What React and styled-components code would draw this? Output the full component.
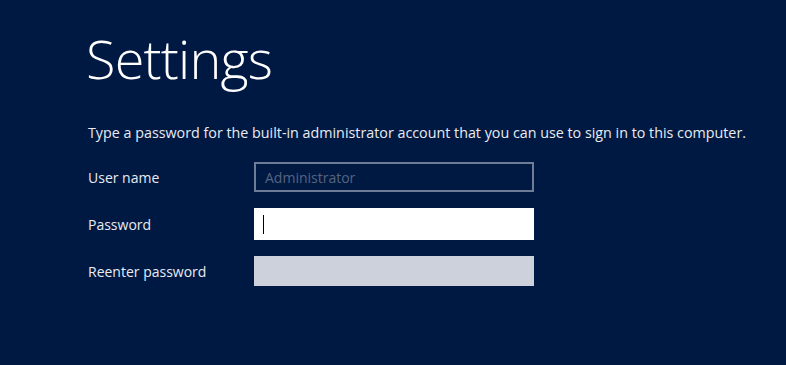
import styled, { createGlobalStyle } from "styled-components";

const GlobalStyle = createGlobalStyle`
  html, body {
    margin: 0;
    padding: 0;
    background: #001943;
  }
  body {
    font-family: "Open Sans", "Noto Sans", sans-serif;
  }
`;

const Page = styled.div`
  width: 786px;
  height: 365px;
  background: #001943;
  box-sizing: border-box;
  padding: 23px 0 0 88px;
  color: #ffffff;
`;

const Title = styled.h1`
  margin: 0 0 0 -2px;
  font-weight: 300;
  font-size: 54px;
  line-height: 70px;
  letter-spacing: -0.8px;
`;

const Intro = styled.p`
  margin: 31px 0 20px;
  font-size: 14.3px;
  line-height: 18px;
  color: #e8ebf2;
`;

const Form = styled.div`
  display: grid;
  grid-template-columns: 166px 280px;
  row-gap: 16px;
  align-items: center;
`;

const Label = styled.label`
  font-size: 14px;
  color: #e8ebf2;
`;

const Field = styled.div`
  height: ${(p) => (p.$variant === "active" ? "32px" : "30px")};
  box-sizing: border-box;
  display: flex;
  align-items: center;
  padding: 0 9px;
  font-size: 14px;
  background: ${(p) => (p.$variant === "active" ? "#ffffff" : p.$variant === "disabled" ? "#cdd1db" : "transparent")};
  border: ${(p) => (p.$variant === "readonly" ? "2px solid #6f7c97" : "none")};
  color: #56647f;
`;

const Caret = styled.span`
  display: block;
  width: 1px;
  height: 19px;
  background: #000;
`;

export default function App() {
  return (
    <>
      <GlobalStyle />
      <Page>
        <Title>Settings</Title>
        <Intro>
          Type a password for the built-in administrator account that you can use to sign in to this computer.
        </Intro>
        <Form>
          <Label>User name</Label>
          <Field $variant="readonly">Administrator</Field>
          <Label>Password</Label>
          <Field $variant="active">
            <Caret />
          </Field>
          <Label>Reenter password</Label>
          <Field $variant="disabled" />
        </Form>
      </Page>
    </>
  );
}
